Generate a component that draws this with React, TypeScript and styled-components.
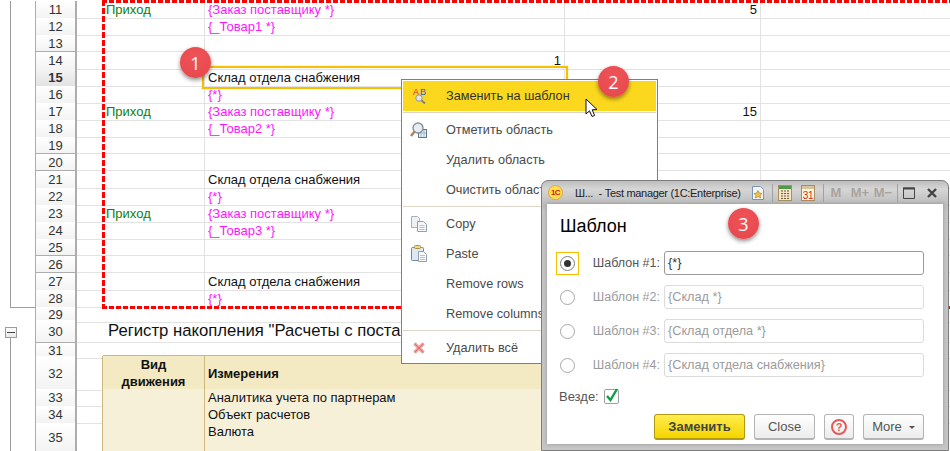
import React, { FC, ReactNode } from 'react';
import styled, { createGlobalStyle } from 'styled-components';

const GlobalStyle = createGlobalStyle`
  html, body {
    margin: 0;
    padding: 0;
    background: #fff;
  }
  body {
    font-family: "Liberation Sans", Arial, sans-serif;
    font-size: 13px;
    color: #111;
  }
`;

const COLUMNS = '35px 42px 26px 102px 360px 196px 1fr';
const GRID = '#e2e2e2';
const TAN = '#cdb97c';

const Sheet = styled.div`
  position: relative;
  box-sizing: border-box;
  width: 950px;
  height: 451px;
  padding-top: 1px;
  overflow: hidden;
  background: #fff;
`;

const Row = styled.div<{ $h: number }>`
  display: grid;
  grid-template-columns: ${COLUMNS};
  height: ${(p) => p.$h}px;
`;

const Outline = styled.div<{ $mode: 'line' | 'end' | 'none' }>`
  box-sizing: border-box;
  margin-left: 10px;
  border-left: ${(p) => (p.$mode === 'none' ? 'none' : '1px solid #9c9c9c')};
  border-bottom: ${(p) => (p.$mode === 'end' ? '1px solid #9c9c9c' : 'none')};
`;

const ToggleCell = styled.div`
  display: flex;
  flex-direction: column;
  align-items: flex-start;
  padding: 7px 0 0 5px;
`;

const ToggleBox = styled.div`
  display: flex;
  align-items: center;
  justify-content: center;
  box-sizing: border-box;
  width: 12px;
  height: 11px;
  border: 1px solid #9c9c9c;
  background: linear-gradient(#fff, #e8e8e8);
  &::after {
    content: '';
    width: 8px;
    height: 1px;
    background: #444;
  }
`;

const ToggleStem = styled.div`
  flex: 1;
  width: 1px;
  margin-left: 5px;
  background: #9c9c9c;
`;

const RowHead = styled.div<{ $active?: boolean }>`
  box-sizing: border-box;
  display: flex;
  align-items: center;
  justify-content: center;
  border: 1px solid #adadad;
  border-top: none;
  border-right-width: 2px;
  background: ${(p) => (p.$active ? 'linear-gradient(#f4f4f4, #e2e2e2)' : 'linear-gradient(#fff, #f3f3f3)')};
  font-weight: ${(p) => (p.$active ? 700 : 400)};
  color: #333;
  font-size: 13px;
`;

const Cell = styled.div<{ $tone?: 'plain' | 'tpl' | 'move'; $end?: boolean; $open?: boolean }>`
  box-sizing: border-box;
  padding: 0 3px;
  line-height: 17px;
  white-space: nowrap;
  border-bottom: 1px solid ${GRID};
  border-right: ${(p) => (p.$open ? 'none' : `1px solid ${GRID}`)};
  text-align: ${(p) => (p.$end ? 'right' : 'left')};
  color: ${(p) => (p.$tone === 'tpl' ? '#ff14ff' : p.$tone === 'move' ? '#0b8012' : '#111')};
`;

const TitleCell = styled.div`
  grid-column: span 4;
  box-sizing: border-box;
  padding-left: 5px;
  border-bottom: 1px solid ${GRID};
  font-size: 16.7px;
  line-height: 22px;
  white-space: nowrap;
  color: #111;
`;

const TableCell = styled.div<{ $head?: boolean; $center?: boolean; $open?: boolean; $first?: boolean }>`
  box-sizing: border-box;
  display: flex;
  align-items: ${(p) => (p.$head ? 'center' : 'flex-start')};
  justify-content: ${(p) => (p.$center ? 'center' : 'flex-start')};
  padding: 0 3px;
  line-height: 17px;
  text-align: ${(p) => (p.$center ? 'center' : 'left')};
  font-weight: ${(p) => (p.$head ? 700 : 400)};
  background: ${(p) => (p.$head ? '#f3eac4' : '#f7f0d9')};
  border-bottom: ${(p) => (p.$open ? 'none' : `1px solid ${TAN}`)};
  border-right: 1px solid ${TAN};
  box-shadow: ${(p) => (p.$first ? `-1px 0 0 ${TAN}` : '0 0 0 transparent')}${(p) => (p.$head ? `, 0 -1px 0 ${TAN}` : '')};
`;

const RedZone = styled.div`
  position: absolute;
  left: 102px;
  top: 0;
  width: 1000px;
  height: 309px;
  background:
    repeating-linear-gradient(90deg, #ff0000 0 5px, transparent 5px 7px) left top / 100% 3px no-repeat,
    repeating-linear-gradient(90deg, #ff0000 0 5px, transparent 5px 7px) left bottom / 100% 3px no-repeat,
    repeating-linear-gradient(180deg, #ff0000 0 6px, transparent 6px 8px) left top / 3px 100% no-repeat;
`;

const CellFocus = styled.div`
  position: absolute;
  left: 202px;
  top: 66px;
  box-sizing: border-box;
  width: 366px;
  height: 23px;
  border: 2px solid #f6c000;
  box-shadow: 0 0 1px #f6c000;
`;

const Badge = styled.div<{ $x: number; $y: number }>`
  position: absolute;
  left: ${(p) => p.$x - 15}px;
  top: ${(p) => p.$y - 15}px;
  width: 31px;
  height: 31px;
  border-radius: 50%;
  display: flex;
  align-items: center;
  justify-content: center;
  background: radial-gradient(circle at 50% 35%, #ef5358, #e4474b);
  box-shadow: 0 2px 4px rgba(0, 0, 0, 0.45);
  color: #fff;
  font-family: "Open Sans", sans-serif;
  font-size: 18px;
`;

const Menu = styled.div`
  position: absolute;
  left: 401px;
  top: 79px;
  box-sizing: border-box;
  width: 257px;
  height: 285px;
  padding: 1px;
  border: 1px solid #808080;
  background: #fff;
`;

const MenuItem = styled.div<{ $hot?: boolean }>`
  box-sizing: border-box;
  display: flex;
  align-items: center;
  gap: 18px;
  height: 30px;
  padding: 0 0 1px 7px;
  white-space: nowrap;
  overflow: hidden;
  background: ${(p) => (p.$hot ? '#fbd81e' : 'transparent')};
  color: ${(p) => (p.$hot ? '#333' : '#4a4a4a')};
  font-size: 12.7px;
`;

const IconSlot = styled.span`
  flex: none;
  display: flex;
  width: 18px;
  height: 18px;
`;

const MenuRule = styled.div`
  height: 1px;
  margin: 1px 0 2px;
  background: #ddd6c6;
`;

const Pointer = styled.svg`
  position: absolute;
  left: 585px;
  top: 98px;
`;

const Dialog = styled.div`
  position: absolute;
  left: 541px;
  top: 180px;
  box-sizing: border-box;
  display: flex;
  flex-direction: column;
  width: 408px;
  height: 271px;
  padding: 0 5px 6px;
  border: 1px solid #7d7d7d;
  border-radius: 7px 7px 0 0;
  background: linear-gradient(#bdbdbd, #d6d6d6 8px, #bcbcbc 24px, #c6c6c6 30px);
`;

const TitleBar = styled.div`
  display: flex;
  align-items: center;
  flex: none;
  height: 23px;
  font-size: 11px;
  letter-spacing: -0.3px;
  color: #222;
  white-space: nowrap;
`;

const LogoMark = styled.div`
  flex: none;
  display: flex;
  align-items: center;
  justify-content: center;
  box-sizing: border-box;
  width: 15px;
  height: 15px;
  margin-left: 1px;
  border-radius: 50%;
  border: 1px solid #e9a23b;
  background: #ffe14a;
  color: #d0201a;
  font-size: 8px;
  font-weight: 700;
  letter-spacing: -0.5px;
`;

const CaptionText = styled.div`
  flex: none;
  width: 176px;
  margin-left: 12px;
  overflow: hidden;
`;

const BarIcon = styled.svg<{ $gap: number }>`
  flex: none;
  margin-left: ${(p) => p.$gap}px;
`;

const BarRule = styled.div<{ $gap: number }>`
  flex: none;
  width: 1px;
  height: 18px;
  margin-left: ${(p) => p.$gap}px;
  background: #a2a2a2;
`;

const MemKey = styled.div<{ $w: number; $gap: number }>`
  flex: none;
  width: ${(p) => p.$w}px;
  margin-left: ${(p) => p.$gap}px;
  text-align: center;
  color: #aaa39b;
  font-weight: 700;
  font-size: 13px;
  letter-spacing: 0;
`;

const Body = styled.div`
  flex: 1;
  display: flex;
  flex-direction: column;
  padding: 10px 19px 0 9px;
  background: #fff;
  box-shadow: 0 0 4px rgba(0, 0, 0, 0.25);
`;

const Heading = styled.div`
  height: 24px;
  margin: 0 0 13px 4px;
  font-size: 18px;
  line-height: 24px;
  color: #000;
`;

const Choices = styled.div`
  display: grid;
  grid-template-columns: 23px 85px 260px;
  grid-auto-rows: 24px;
  row-gap: 10px;
  align-items: center;
`;

const RadioWrap = styled.div<{ $focus?: boolean }>`
  box-sizing: border-box;
  display: flex;
  align-items: center;
  justify-content: center;
  width: 23px;
  height: 23px;
  border: 1px solid ${(p) => (p.$focus ? '#f6c000' : 'transparent')};
`;

const Radio = styled.div<{ $on?: boolean }>`
  box-sizing: border-box;
  display: flex;
  align-items: center;
  justify-content: center;
  width: 15px;
  height: 15px;
  border-radius: 50%;
  border: 1px solid ${(p) => (p.$on ? '#808080' : '#a8a8a8')};
  background: #fff;
  &::after {
    content: '';
    display: ${(p) => (p.$on ? 'block' : 'none')};
    width: 7px;
    height: 7px;
    border-radius: 50%;
    background: #333;
  }
`;

const Label = styled.div<{ $on?: boolean }>`
  padding-right: 4px;
  text-align: right;
  white-space: nowrap;
  font-size: 12.5px;
  color: ${(p) => (p.$on ? '#555' : '#9b9b9b')};
`;

const Field = styled.div<{ $on?: boolean }>`
  box-sizing: border-box;
  height: 24px;
  padding: 0 3px;
  line-height: 22px;
  font-size: 12.7px;
  border: 1px solid ${(p) => (p.$on ? '#9a9a9a' : '#dcdcdc')};
  border-radius: 3px;
  color: ${(p) => (p.$on ? '#333' : '#9b9b9b')};
`;

const Everywhere = styled.div`
  display: flex;
  align-items: center;
  gap: 5px;
  height: 15px;
  margin: 12px 0 0 3px;
  color: #555;
`;

const CheckBox = styled.div`
  box-sizing: border-box;
  width: 15px;
  height: 15px;
  border: 1px solid #a0a0a0;
  border-radius: 2px;
  display: flex;
  svg {
    overflow: visible;
  }
`;

const Buttons = styled.div`
  display: flex;
  justify-content: flex-end;
  gap: 9px;
  margin-top: 10px;
`;

const Button = styled.div<{ $w: number; $main?: boolean }>`
  box-sizing: border-box;
  display: flex;
  align-items: center;
  justify-content: center;
  gap: 7px;
  width: ${(p) => p.$w}px;
  height: 26px;
  border-radius: 3px;
  border: 1px solid ${(p) => (p.$main ? '#b39a10' : '#b4b4b4')};
  border-bottom-width: 2px;
  background: ${(p) => (p.$main ? 'linear-gradient(#ffec4e, #f6d400)' : 'linear-gradient(#fff, #ececec)')};
  color: ${(p) => (p.$main ? '#444' : '#555')};
  font-weight: ${(p) => (p.$main ? 700 : 400)};
`;

const HelpMark = styled.span`
  box-sizing: border-box;
  display: flex;
  align-items: center;
  justify-content: center;
  width: 16px;
  height: 16px;
  border: 2px solid #e35a5a;
  border-radius: 50%;
  color: #e35a5a;
  font-size: 11px;
  font-weight: 700;
`;

const Caret = styled.span`
  width: 0;
  height: 0;
  margin-top: 2px;
  border: 3px solid transparent;
  border-top: 3px solid #555;
  border-bottom: none;
`;

type TplRow = { n: number; b?: string; c?: string; cTone?: 'plain' | 'tpl'; cEnd?: boolean; d?: string };

const upperRows: TplRow[] = [
  { n: 11, b: 'Приход', c: '{Заказ поставщику *}', cTone: 'tpl', d: '5' },
  { n: 12, c: '{_Товар1 *}', cTone: 'tpl' },
  { n: 13 },
  { n: 14, c: '1', cEnd: true },
  { n: 15, c: 'Склад отдела снабжения' },
  { n: 16, c: '{*}', cTone: 'tpl' },
  { n: 17, b: 'Приход', c: '{Заказ поставщику *}', cTone: 'tpl', d: '15' },
  { n: 18, c: '{_Товар2 *}', cTone: 'tpl' },
  { n: 19 },
  { n: 20 },
  { n: 21, c: 'Склад отдела снабжения' },
  { n: 22, c: '{*}', cTone: 'tpl' },
  { n: 23, b: 'Приход', c: '{Заказ поставщику *}', cTone: 'tpl' },
  { n: 24, c: '{_Товар3 *}', cTone: 'tpl' },
  { n: 25 },
  { n: 26 },
  { n: 27, c: 'Склад отдела снабжения' },
  { n: 28, c: '{*}', cTone: 'tpl' },
];

const ReplaceIcon = () => (
  <svg width="18" height="18" viewBox="0 0 18 18">
    <text x="3" y="8" fontSize="9" fontFamily="Liberation Sans" fill="#d02a2a">A</text>
    <text x="10" y="8" fontSize="9" fontFamily="Liberation Sans" fill="#2a62c0">B</text>
    <circle cx="9" cy="11" r="3.2" fill="#dfe6ee" stroke="#8f959c" />
    <path d="M11.5 13.5 L15 16.5" stroke="#8a7f72" strokeWidth="2" />
  </svg>
);

const MarkIcon = () => (
  <svg width="18" height="18" viewBox="0 0 18 18">
    <rect x="8.5" y="8.5" width="8" height="8" fill="#eaf0f6" stroke="#5a7a94" />
    <path d="M11 9v7M14 9v7M9 12h7" stroke="#9db4c8" />
    <circle cx="8" cy="7" r="5" fill="#e6eef5" stroke="#8b8f92" strokeWidth="1.4" />
    <path d="M4.5 10.5 L1 15" stroke="#a9835c" strokeWidth="2.4" />
  </svg>
);

const CopyIcon = () => (
  <svg width="18" height="18" viewBox="0 0 18 18">
    <path d="M1.5 1.5h6l2 2v9h-8z" fill="#eef1f4" stroke="#a9b2ba" />
    <path d="M7.5 6.5h6l3 3v7h-9z" fill="#f4f6f8" stroke="#8fa0ae" />
    <path d="M9.5 10.5h5M9.5 12.5h5M9.5 14.5h5" stroke="#b6c2cc" />
  </svg>
);

const PasteIcon = () => (
  <svg width="18" height="18" viewBox="0 0 18 18">
    <rect x="1.5" y="2.5" width="12" height="13" rx="1" fill="#dfe8f0" stroke="#6e8aa2" />
    <rect x="4.5" y="0.5" width="6" height="3" rx="1" fill="#f4dc7e" stroke="#a8924a" />
    <path d="M8.5 6.5h5l3 3v7h-8z" fill="#f6f8fa" stroke="#8fa0ae" />
    <path d="M10 10.5h5M10 12.5h5M10 14.5h5" stroke="#b6c2cc" />
  </svg>
);

const DeleteIcon = () => (
  <svg width="18" height="18" viewBox="0 0 18 18">
    <path d="M4.5 4.5 L13.5 13.5 M13.5 4.5 L4.5 13.5" stroke="#eda0a0" strokeWidth="3.4" />
    <path d="M4.5 4.5 L13.5 13.5 M13.5 4.5 L4.5 13.5" stroke="#dc6f6f" strokeWidth="1" />
  </svg>
);

const ArrowCursor = () => (
  <Pointer width="15" height="21" viewBox="0 0 15 21">
    <path d="M1 1 V16 L4.5 12.8 L7 18.5 L9.6 17.4 L7.2 11.8 L12 11.5 Z" fill="#fff" stroke="#111" strokeWidth="1" />
  </Pointer>
);

const MenuEntry: FC<{ icon?: ReactNode; hot?: boolean; children: ReactNode }> = ({ icon, hot, children }) => (
  <MenuItem $hot={hot}>
    <IconSlot>{icon}</IconSlot>
    {children}
  </MenuItem>
);

const Choice: FC<{ n: number; value: string; on?: boolean }> = ({ n, value, on }) => (
  <>
    <RadioWrap $focus={on}>
      <Radio $on={on} />
    </RadioWrap>
    <Label $on={on}>Шаблон #{n}:</Label>
    <Field $on={on}>{value}</Field>
  </>
);

const TemplateDialog = () => (
  <Dialog>
    <TitleBar>
      <LogoMark>1С</LogoMark>
      <CaptionText>Ш...&nbsp; - Test manager (1C:Enterprise)</CaptionText>
      <BarIcon $gap={0} width="14" height="16" viewBox="0 0 14 16">
        <path d="M1.5 1.5h8l3 3v10h-11z" fill="#f2f6fb" stroke="#7f95ad" />
        <path d="M7 5.5l1.4 2.6 2.6.4-1.9 1.9.5 2.6L7 11.6l-2.6 1.4.5-2.6L3 8.5l2.6-.4z" fill="#f0c040" stroke="#a07a20" strokeWidth="0.6" />
      </BarIcon>
      <BarRule $gap={7} />
      <BarIcon $gap={5} width="14" height="16" viewBox="0 0 14 16">
        <rect x="0.5" y="0.5" width="13" height="15" fill="#f5e6c8" stroke="#a88f60" />
        <rect x="1" y="1" width="12" height="3" fill="#4f9a48" />
        <path d="M3 6h2M6 6h2M9 6h2M3 8.5h2M6 8.5h2M9 8.5h2M3 11h2M6 11h2M9 11h2M3 13.5h2M6 13.5h2M9 13.5h2" stroke="#6b5a3a" />
      </BarIcon>
      <BarIcon $gap={9} width="14" height="16" viewBox="0 0 14 16">
        <rect x="0.5" y="0.5" width="13" height="15" fill="#fdf3dc" stroke="#a88f60" />
        <rect x="1" y="1" width="12" height="3" fill="#d8c49a" />
        <text x="7" y="14" textAnchor="middle" fontSize="10" fontFamily="Liberation Sans" fill="#d8261c">31</text>
      </BarIcon>
      <BarRule $gap={8} />
      <MemKey $w={14} $gap={5}>M</MemKey>
      <MemKey $w={20} $gap={7}>M+</MemKey>
      <MemKey $w={20} $gap={3}>M−</MemKey>
      <BarRule $gap={4} />
      <BarIcon $gap={5} width="12" height="12" viewBox="0 0 12 12">
        <path d="M0.5 1h11v10.5h-11z" fill="none" stroke="#444" />
        <path d="M0 1.5h12" stroke="#444" strokeWidth="2" />
      </BarIcon>
      <BarIcon $gap={11} width="12" height="12" viewBox="0 0 12 12">
        <path d="M2 2 L10 10 M10 2 L2 10" stroke="#444" strokeWidth="2.4" />
      </BarIcon>
    </TitleBar>
    <Body>
      <Heading>Шаблон</Heading>
      <Choices>
        <Choice n={1} value="{*}" on />
        <Choice n={2} value="{Склад *}" />
        <Choice n={3} value="{Склад отдела *}" />
        <Choice n={4} value="{Склад отдела снабжения}" />
      </Choices>
      <Everywhere>
        Везде:
        <CheckBox>
          <svg width="13" height="13" viewBox="0 0 13 13">
            <path d="M2 6 L5.5 10 L12 -1" fill="none" stroke="#0f9a48" strokeWidth="2.4" />
          </svg>
        </CheckBox>
      </Everywhere>
      <Buttons>
        <Button $w={91} $main>Заменить</Button>
        <Button $w={61}>Close</Button>
        <Button $w={30}><HelpMark>?</HelpMark></Button>
        <Button $w={61}>More<Caret /></Button>
      </Buttons>
    </Body>
  </Dialog>
);

const App = () => (
  <Sheet>
    <GlobalStyle />
    {upperRows.map((r) => (
      <Row key={r.n} $h={17}>
        <Outline $mode={r.n === 28 ? 'end' : 'line'} />
        <RowHead $active={r.n === 15}>{r.n}</RowHead>
        <Cell $open />
        <Cell $tone="move">{r.b}</Cell>
        <Cell $tone={r.cTone} $end={r.cEnd}>{r.c}</Cell>
        <Cell $end>{r.d}</Cell>
        <Cell $open />
      </Row>
    ))}
    <Row $h={13}>
      <Outline $mode="none" />
      <RowHead>29</RowHead>
      <Cell $open />
      <Cell $open />
      <Cell $open />
      <Cell $open />
      <Cell $open />
    </Row>
    <Row $h={23}>
      <ToggleCell>
        <ToggleBox />
        <ToggleStem />
      </ToggleCell>
      <RowHead>30</RowHead>
      <Cell $open />
      <TitleCell>Регистр накопления "Расчеты с поставщиками"</TitleCell>
    </Row>
    <Row $h={13}>
      <Outline $mode="line" />
      <RowHead>31</RowHead>
      <Cell $open />
      <Cell $open />
      <Cell $open />
      <Cell $open />
      <Cell $open />
    </Row>
    <Row $h={33}>
      <Outline $mode="line" />
      <RowHead>32</RowHead>
      <Cell $open />
      <TableCell $head $center $first>Вид<br />движения</TableCell>
      <TableCell $head>Измерения</TableCell>
      <TableCell $head />
      <Cell $open />
    </Row>
    <Row $h={17}>
      <Outline $mode="line" />
      <RowHead>33</RowHead>
      <Cell $open />
      <TableCell $first $open />
      <TableCell>Аналитика учета по партнерам</TableCell>
      <TableCell />
      <Cell $open />
    </Row>
    <Row $h={17}>
      <Outline $mode="line" />
      <RowHead>34</RowHead>
      <Cell $open />
      <TableCell $first $open />
      <TableCell>Объект расчетов</TableCell>
      <TableCell />
      <Cell $open />
    </Row>
    <Row $h={30}>
      <Outline $mode="line" />
      <RowHead>35</RowHead>
      <Cell $open />
      <TableCell $first $open />
      <TableCell>Валюта</TableCell>
      <TableCell />
      <Cell $open />
    </Row>

    <RedZone />
    <CellFocus />
    <Badge $x={195} $y={62}>1</Badge>
    <Menu>
      <MenuEntry hot icon={<ReplaceIcon />}>Заменить на шаблон</MenuEntry>
      <MenuRule />
      <MenuEntry icon={<MarkIcon />}>Отметить область</MenuEntry>
      <MenuEntry>Удалить область</MenuEntry>
      <MenuEntry>Очистить область</MenuEntry>
      <MenuRule />
      <MenuEntry icon={<CopyIcon />}>Copy</MenuEntry>
      <MenuEntry icon={<PasteIcon />}>Paste</MenuEntry>
      <MenuEntry>Remove rows</MenuEntry>
      <MenuEntry>Remove columns</MenuEntry>
      <MenuRule />
      <MenuEntry icon={<DeleteIcon />}>Удалить всё</MenuEntry>
    </Menu>
    <Badge $x={613} $y={81}>2</Badge>
    <ArrowCursor />
    <TemplateDialog />
    <Badge $x={743} $y={223}>3</Badge>
  </Sheet>
);

export default App;
